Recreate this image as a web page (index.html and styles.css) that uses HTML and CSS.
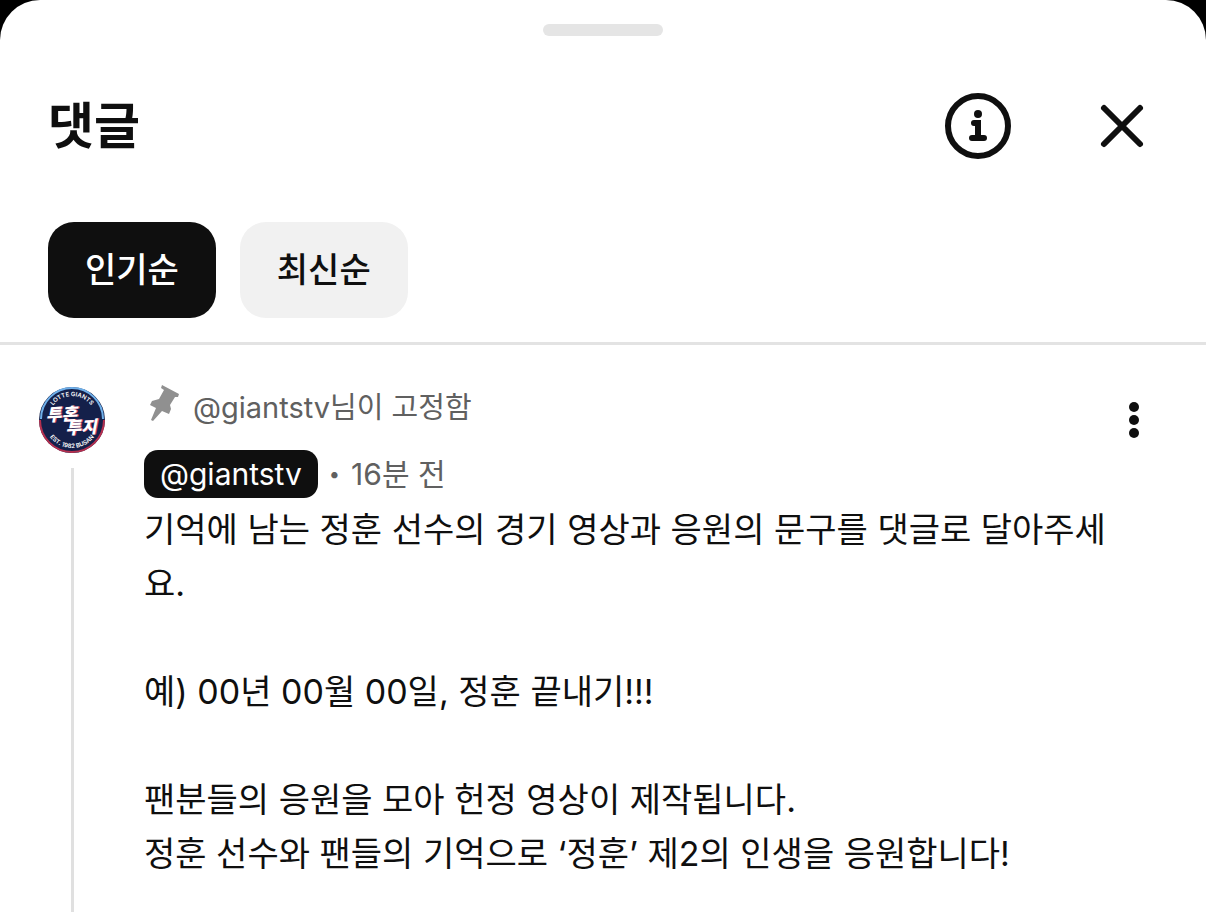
FILE: index.html
```html
<!DOCTYPE html>
<html lang="ko">
<head>
<meta charset="utf-8">
<meta name="viewport" content="width=device-width, initial-scale=1">
<title>댓글</title>
<link rel="stylesheet" href="styles.css">
</head>
<body>
<main class="sheet">
  <div class="handle"></div>
  <header class="header">
    <h1 class="title">댓글</h1>
    <div class="actions">
      <button class="icon-button" type="button" aria-label="정보">
        <svg width="72" height="72" viewBox="0 0 72 72" fill="none" stroke="#0f0f0f" stroke-width="6" stroke-linecap="round" stroke-linejoin="round">
          <circle cx="36" cy="36" r="30"/>
          <circle cx="36" cy="24" r="4" fill="#0f0f0f" stroke="none"/>
          <path d="M32 33h4M30 48h12"/>
          <path d="M33 30h6v18h-6z" fill="#0f0f0f" stroke="none"/>
        </svg>
      </button>
      <button class="icon-button" type="button" aria-label="닫기">
        <svg width="72" height="72" viewBox="0 0 72 72" fill="none" stroke="#0f0f0f" stroke-width="6" stroke-linecap="round">
          <path d="M18 18l36 36M54 18L18 54"/>
        </svg>
      </button>
    </div>
  </header>
  <nav class="filters" aria-label="정렬">
    <button class="chip chip-active" type="button">인기순</button>
    <button class="chip" type="button">최신순</button>
  </nav>
  <article class="comment">
    <div class="rail">
      <svg class="avatar" width="68" height="68" viewBox="0 0 68 68" role="img" aria-label="giantstv">
        <defs>
          <path id="arc-top" d="M10 34a24 24 0 0 1 48 0"/>
          <path id="arc-bottom" d="M6 34a28 28 0 0 0 56 0"/>
        </defs>
        <circle cx="34" cy="34" r="33" fill="#14204a"/>
        <path d="M3 33a31 31 0 0 1 62 0" fill="none" stroke="#6fb0ea" stroke-width="2"/>
        <path d="M2 34a32 32 0 0 0 64 0" fill="none" stroke="#b5304f" stroke-width="2"/>
        <text class="logo-ring"><textPath href="#arc-top" startOffset="50%" text-anchor="middle">LOTTE GIANTS</textPath></text>
        <text class="logo-ring"><textPath href="#arc-bottom" startOffset="50%" text-anchor="middle">EST. 1982 BUSAN</textPath></text>
        <g transform="rotate(-3 34 34)">
          <text class="logo-word logo-shade" x="9" y="34">투혼</text>
          <text class="logo-word" x="8" y="34">투혼</text>
          <text class="logo-word logo-shade" x="28" y="48">투지</text>
          <text class="logo-word" x="27" y="48">투지</text>
        </g>
      </svg>
      <div class="thread"></div>
    </div>
    <div class="body">
      <div class="pinned">
        <svg class="pin" width="40" height="40" viewBox="0 0 40 40" fill="#909090">
          <path d="M18 0L35 9L34 12L31 12L26 20L27 24L25 29L18 26L9 36L7 35L12 23L6 20L8 16L15 14L20 5L17 3Z"/>
        </svg>
        <span>@giantstv님이 고정함</span>
      </div>
      <div class="meta">
        <a class="author" href="#giantstv">@giantstv</a>
        <span class="dot">•</span>
        <time class="time">16분 전</time>
      </div>
      <p class="text">기억에 남는 정훈 선수의 경기 영상과 응원의 문구를 댓글로 달아주세요.

예) 00년 00월 00일, 정훈 끝내기!!!

팬분들의 응원을 모아 헌정 영상이 제작됩니다.
정훈 선수와 팬들의 기억으로 ‘정훈’ 제2의 인생을 응원합니다!</p>
    </div>
    <button class="menu" type="button" aria-label="더보기">
      <svg width="48" height="48" viewBox="0 0 48 48" fill="#0f0f0f">
        <circle cx="24" cy="11" r="5"/><circle cx="24" cy="24" r="5"/><circle cx="24" cy="37" r="5"/>
      </svg>
    </button>
  </article>
</main>
</body>
</html>
```
FILE: styles.css
```css
* {
  box-sizing: border-box;
}

body {
  margin: 0;
  background: #000;
  color: #0f0f0f;
  font-family: Inter, "Noto Sans CJK KR", sans-serif;
}

button {
  margin: 0;
  padding: 0;
  border: 0;
  background: none;
  color: inherit;
  font: inherit;
  cursor: pointer;
}

svg {
  display: block;
}

.sheet {
  display: flex;
  flex-direction: column;
  min-height: 100vh;
  padding-top: 24px;
  border-radius: 40px 40px 0 0;
  background: #fff;
}

.handle {
  align-self: center;
  width: 120px;
  height: 12px;
  border-radius: 6px;
  background: #e5e5e5;
}

.header {
  display: flex;
  align-items: center;
  justify-content: space-between;
  padding: 54px 48px 60px;
}

.title {
  margin: 0;
  font-size: 50px;
  line-height: 72px;
  font-weight: 700;
}

.actions {
  display: flex;
  gap: 72px;
}

.filters {
  display: flex;
  gap: 24px;
  padding: 0 48px 24px;
  border-bottom: 3px solid #e3e3e3;
}

.chip {
  height: 96px;
  padding: 0 37px 6px;
  border-radius: 26px;
  background: #f1f1f1;
  font-size: 34px;
  font-weight: 500;
}

.chip-active {
  background: #0f0f0f;
  color: #fff;
}

.comment {
  flex: 1;
  display: grid;
  grid-template-columns: 68px 1fr 48px;
  padding: 41px 48px 0 38px;
}

.rail {
  display: flex;
  flex-direction: column;
  align-items: center;
  gap: 14px;
}

.thread {
  flex: 1;
  width: 3px;
  background: #e0e0e0;
}

.logo-ring {
  fill: #fff;
  font-size: 6px;
  font-weight: 600;
}

.logo-word {
  fill: #fff;
  font-size: 17px;
  font-weight: 900;
  font-style: italic;
}

.logo-shade {
  fill: #d8476a;
}

.body {
  padding-left: 38px;
}

.pinned {
  display: flex;
  align-items: center;
  gap: 9px;
  height: 38px;
  color: #606060;
  font-size: 29px;
}

.meta {
  display: flex;
  align-items: center;
  gap: 11px;
  margin: 26px 0 5px;
  color: #606060;
  font-size: 30px;
  line-height: 48px;
}

.author {
  padding: 0 16px;
  border-radius: 14px;
  background: #0f0f0f;
  color: #fff;
  text-decoration: none;
}

.dot {
  font-size: 20px;
}

.text {
  margin: 0;
  font-size: 34px;
  line-height: 54px;
  white-space: pre-line;
}

.menu {
  align-self: start;
  width: 48px;
  height: 48px;
  margin-top: 10px;
}
```
